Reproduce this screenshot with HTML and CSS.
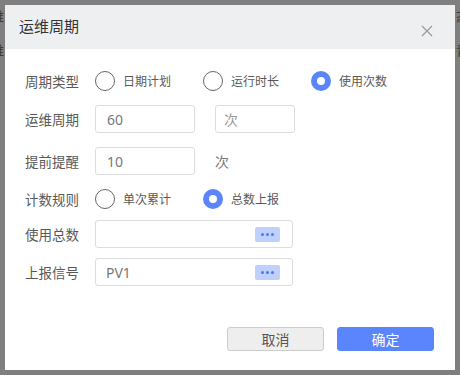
FILE: index.html
```html
<!DOCTYPE html>
<html lang="zh-CN">
<head>
    <meta charset="UTF-8">
    <meta name="viewport" content="width=device-width, initial-scale=1.0">
    <title>运维周期</title>
    <link rel="stylesheet" href="styles.css">
</head>
<body>

    <!-- pagina detras del modal -->
    <div class="page">
        <div class="page-row"><span>维</span><span>态</span></div>
        <div class="page-row"><span>维</span><span>青</span></div>
    </div>

    <div class="dialog">
        <div class="dialog-header">
            <span class="dialog-title">运维周期</span>
            <svg class="close" width="12" height="12" viewBox="0 0 12 12">
                <path d="M1 1 L11 11 M11 1 L1 11" stroke="#9a9a9a" stroke-width="1.2" fill="none"/>
            </svg>
        </div>

        <div class="dialog-body">
            <div class="row row-radio">
                <label class="row-label">周期类型</label>
                <span class="radio"><i class="dot"></i>日期计划</span>
                <span class="radio"><i class="dot"></i>运行时长</span>
                <span class="radio"><i class="dot checked"></i>使用次数</span>
            </div>
            <div class="row row-wide">
                <label class="row-label">运维周期</label>
                <input class="input input-short" type="text" value="60">
                <input class="input input-unit" type="text" placeholder="次">
            </div>
            <div class="row">
                <label class="row-label">提前提醒</label>
                <input class="input input-short" type="text" value="10">
                <span class="unit">次</span>
            </div>
            <div class="row row-radio row-tight">
                <label class="row-label">计数规则</label>
                <span class="radio"><i class="dot"></i>单次累计</span>
                <span class="radio"><i class="dot checked"></i>总数上报</span>
            </div>
            <div class="row">
                <label class="row-label">使用总数</label>
                <div class="input input-long">
                    <span class="input-text"></span>
                    <span class="more"><i></i><i></i><i></i></span>
                </div>
            </div>
            <div class="row">
                <label class="row-label">上报信号</label>
                <div class="input input-long">
                    <span class="input-text">PV1</span>
                    <span class="more"><i></i><i></i><i></i></span>
                </div>
            </div>
        </div>

        <div class="dialog-footer">
            <button class="btn btn-cancel">取消</button>
            <button class="btn btn-ok">确定</button>
        </div>
    </div>

</body>
</html>
```

FILE: styles.css
```css
body {
    margin: 0;
    height: 375px;
    overflow: hidden;
    background-color: #7f7f7f;
    font-family: "Noto Sans", "Noto Sans CJK SC", sans-serif;
    position: relative;
}
.page {
    padding-top: 6px;
}
.page-row {
    display: flex;
    justify-content: space-between;
    margin: 0 -9px 14px;
    height: 20px;
    font-size: 13px;
    color: #3a3a3a;
}
.dialog {
    position: absolute;
    left: 5px;
    top: 5px;
    width: 450px;
    height: 365px;
    background-color: #fff;
    display: flex;
    flex-direction: column;
}
.dialog-header {
    height: 44px;
    background-color: #eeeff1;
    display: flex;
    align-items: center;
    justify-content: space-between;
    padding: 0 22px 0 14px;
}
.dialog-title {
    font-size: 15px;
    color: #333;
    line-height: 20px;
    margin-top: -2px;
}
.close {
    margin-top: 8px;
}
.dialog-body {
    padding: 18px 0 0 20px;
    flex-grow: 1;
}
.row {
    display: flex;
    align-items: center;
    height: 28px;
    margin-bottom: 10px;
}
.row-wide {
    margin-bottom: 14px;
}
.row-tight {
    margin-bottom: 7px;
}
.row-label {
    width: 70px;
    font-size: 13.5px;
    color: #595959;
}
.radio {
    width: 108px;
    display: flex;
    align-items: center;
    font-size: 12px;
    color: #595959;
}
.dot {
    box-sizing: border-box;
    width: 20px;
    height: 20px;
    border: 1.3px solid #666;
    border-radius: 50%;
    margin-right: 8px;
}
.dot.checked {
    border: 6px solid #5b85fb;
}
.input {
    box-sizing: border-box;
    height: 28px;
    border: 1px solid #dcdde0;
    border-radius: 3px;
    padding: 0 11px;
    font-family: inherit;
    font-size: 14px;
    color: #777;
    outline: none;
}
.input::placeholder {
    color: #999;
}
.input-short {
    width: 100px;
}
.input-unit {
    width: 80px;
    margin-left: 20px;
    padding-left: 8px;
}
.unit {
    margin-left: 20px;
    font-size: 14px;
    color: #777;
}
.input-long {
    width: 198px;
    display: flex;
    align-items: center;
    justify-content: space-between;
    padding: 0 12px 0 10px;
}
.more {
    width: 25px;
    height: 15px;
    background-color: #bfd0fd;
    border-radius: 2px;
    display: flex;
    align-items: center;
    justify-content: center;
    gap: 2px;
}
.more i {
    width: 3px;
    height: 3px;
    border-radius: 50%;
    background-color: #4b79f3;
}
.dialog-footer {
    display: flex;
    justify-content: flex-end;
    gap: 13px;
    padding: 0 21px 19px 0;
}
.btn {
    width: 97px;
    height: 24px;
    border-radius: 3px;
    font-family: inherit;
    font-size: 14px;
    padding: 0;
    cursor: pointer;
}
.btn-cancel {
    background-color: #efeeee;
    border: 1px solid #cdcdcd;
    color: #555;
}
.btn-ok {
    background-color: #5b85fc;
    border: 1px solid #5b85fc;
    color: #fff;
}
```
